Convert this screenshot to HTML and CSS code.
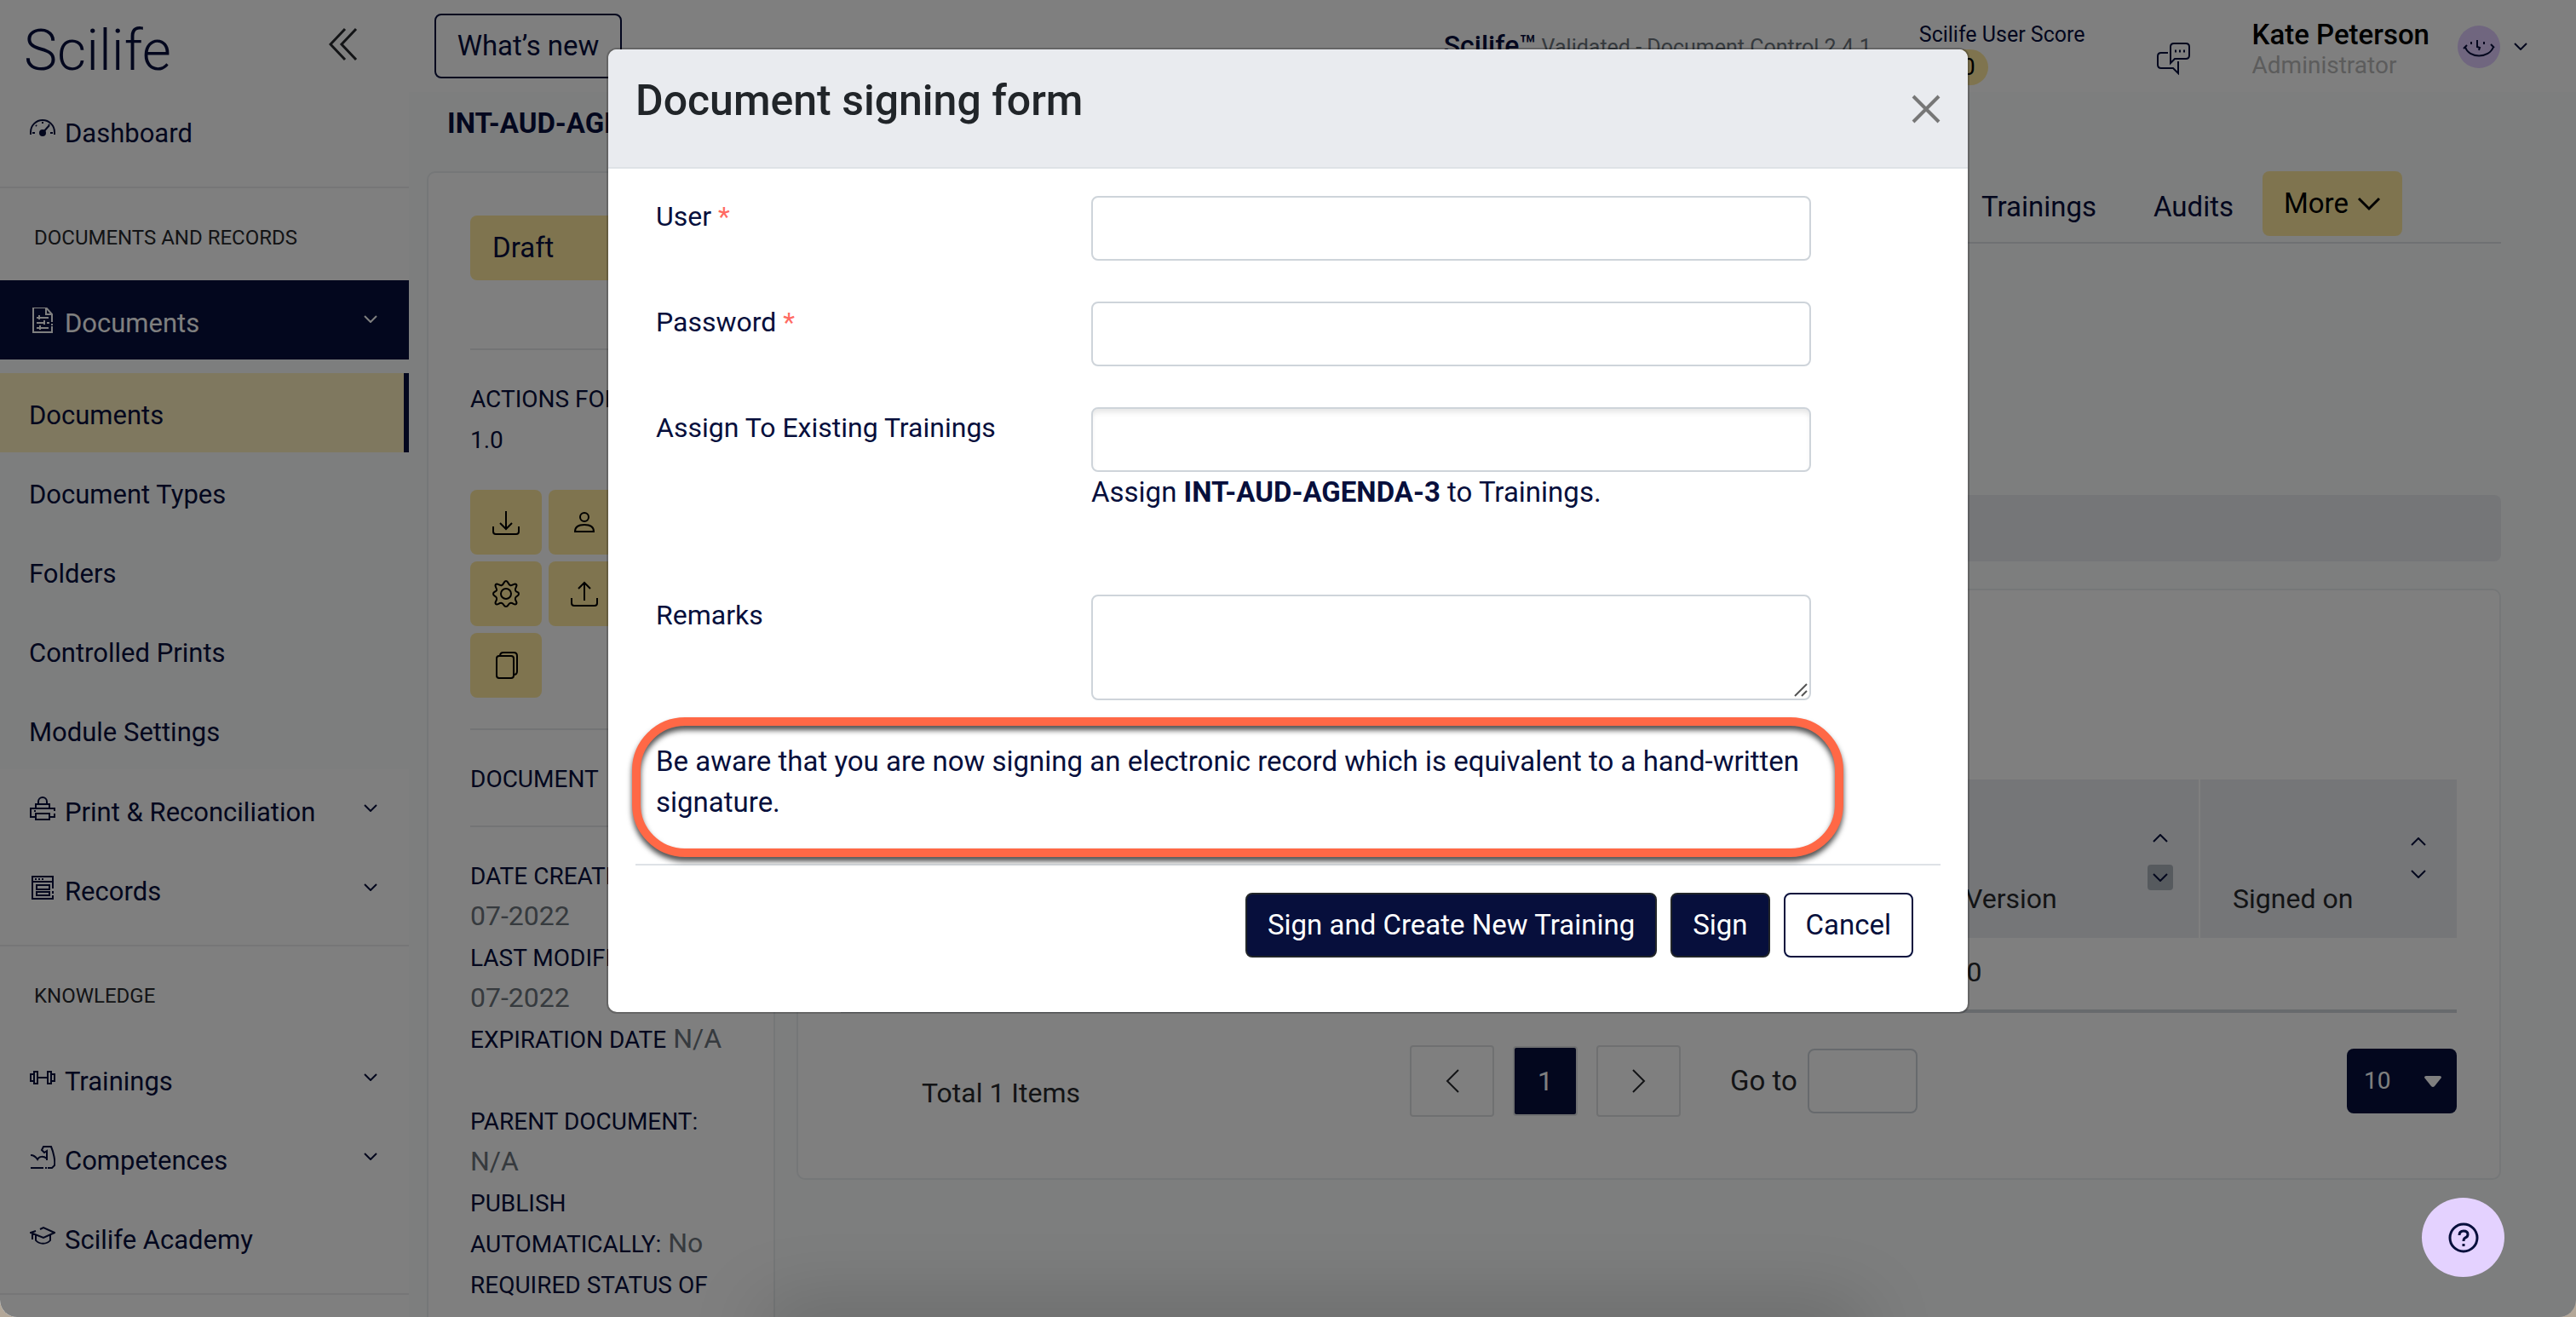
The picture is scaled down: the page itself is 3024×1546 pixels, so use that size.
FILE: index.html
```html
<!DOCTYPE html>
<html lang="en">

<head>
    <meta charset="UTF-8">
    <meta name="viewport" content="width=device-width, initial-scale=1.0">
    <title>Scilife - Document signing form</title>
    <link rel="stylesheet" href="styles.css">
</head>

<body>
    <div class="page">
        <nav class="sidebar">
            <div class="side-top">
                <a class="logo" href="#">Scilife</a>
                <button class="collapse" aria-label="Collapse menu">
                    <svg width="34" height="40" viewBox="0 0 34 40"><path d="M19 2L2 20l17 18M32 2L15 20l17 18" /></svg>
                </button>
            </div>
            <a class="item" href="#">
                <svg class="ico" viewBox="0 0 30 30"><path d="M1 20v-3a14 14 0 0 1 28 0v3M15 18l8-9M15 5v2M7 9l1 1M3 18h3M24 18h3M22 8l1 1" /><circle class="fill" cx="15" cy="18" r="3" /></svg>
                Dashboard
            </a>
            <hr>
            <h2>DOCUMENTS AND RECORDS</h2>
            <a class="item open" href="#">
                <svg class="ico" viewBox="0 0 30 30"><path d="M26 17V8l-7-8H4v29h22v-7M26 19v2M19 0v8h7M8 12h14M8 18h10M20 18h3M8 24h14M11 9v5M17 15v5M12 21v5" /></svg>
                Documents
                <svg class="chev" viewBox="0 0 16 9"><path d="M1 1l7 7 7-7" /></svg>
            </a>
            <div class="submenu">
                <a class="sub active" href="#">Documents</a>
                <a class="sub" href="#">Document Types</a>
                <a class="sub" href="#">Folders</a>
                <a class="sub" href="#">Controlled Prints</a>
                <a class="sub" href="#">Module Settings</a>
            </div>
            <a class="item" href="#">
                <svg class="ico" viewBox="0 0 30 30"><path d="M10 8V6a5 5 0 0 1 10 0v2M7 14V9h16v5M7 24H1V14h28v3M29 20v4h-6M7 20h16v7H7zM5 17h2" /></svg>
                Print &amp; Reconciliation
                <svg class="chev" viewBox="0 0 16 9"><path d="M1 1l7 7 7-7" /></svg>
            </a>
            <a class="item" href="#">
                <svg class="ico" viewBox="0 0 30 30"><path d="M27 15V1H3v26h24v-4M27 18v3M3 7h24M6 4h2M10 4h2M14 4h2M8 11h15v5H8zM8 19h15v4H8z" /></svg>
                Records
                <svg class="chev" viewBox="0 0 16 9"><path d="M1 1l7 7 7-7" /></svg>
            </a>
            <hr>
            <h2>KNOWLEDGE</h2>
            <a class="item" href="#">
                <svg class="ico" viewBox="0 0 30 30"><path d="M5 7h4v14H5zM5 10H1v8h4M21 7h4v14h-4zM25 10h4v8h-4M9 14h12" /></svg>
                Trainings
                <svg class="chev" viewBox="0 0 16 9"><path d="M1 1l7 7 7-7" /></svg>
            </a>
            <a class="item" href="#">
                <svg class="ico" viewBox="0 0 30 30"><path d="M1 12c4 0 6 2 8 5 2-4 7-4 11-1V7l-3 2-3-3 2-4h9c3 7 5 17 4 22l-3 3h-5M1 27h15M18 27h2M20 16v2" /></svg>
                Competences
                <svg class="chev" viewBox="0 0 16 9"><path d="M1 1l7 7 7-7" /></svg>
            </a>
            <a class="item" href="#">
                <svg class="ico" viewBox="0 0 30 30"><path d="M12 6l4-2 13 6-13 6L1 10l6-2M7 13v6c4 5 13 5 17 0v-6M3 11v7" /></svg>
                Scilife Academy
            </a>
            <hr>
        </nav>

        <div class="main">
            <header class="topbar">
                <button class="whats-new">What’s new</button>
                <div class="brand"><b>Scilife™</b> Validated - Document Control 2.4.1</div>
                <div class="score">
                    <span>Scilife User Score</span>
                    <span class="badge">0</span>
                </div>
                <button class="chat" aria-label="Messages">
                    <svg width="40" height="38" viewBox="0 0 40 38"><path d="M20 1h14q4 0 4 4v10q0 4-4 4H21l-5 5V5q0-4 4-4zM13 12H5q-4 0-4 4v10q0 4 4 4h14l6 6V22" /><path class="dots" d="M21 10h2M26 10h2M31 10h2" /></svg>
                </button>
                <div class="user">
                    <b>Kate Peterson</b>
                    <span>Administrator</span>
                </div>
                <svg class="avatar" viewBox="0 0 50 50"><circle cx="25" cy="25" r="25" /><path d="M9 25c4 14 28 14 33 0M7 27l4-4M39 22l4 4M16 19v3M31 19v3M23 17v8l3 1-1 3" /></svg>
                <svg class="chev" viewBox="0 0 16 9"><path d="M1 1l7 7 7-7" /></svg>
            </header>
            <h1>INT-AUD-AGENDA-3</h1>

            <div class="columns">
                <aside class="card info">
                    <button class="status">Draft</button>
                    <hr class="after-status">
                    <p><span class="label">ACTIONS FOR VERSION<br>1.0</span></p>
                    <div class="actions">
                        <button aria-label="Download"><svg viewBox="0 0 32 32"><path d="M16 3v21M9 17l7 7 7-7M1 21v6q0 3 3 3h24q3 0 3-3v-6" /></svg></button>
                        <button aria-label="Assign user"><svg viewBox="0 0 32 32"><circle cx="16" cy="10" r="5" /><path d="M5 27q0-8 11-8t11 8z" /></svg></button>
                        <button aria-label="Edit"><svg viewBox="0 0 32 32"><path d="M4 28l2-8L24 2l6 6-18 18z" /></svg></button>
                        <button aria-label="Settings"><svg viewBox="0 0 32 32"><circle cx="16" cy="16" r="6" /><path d="M16 1c3 0 2 4 5 5s5-3 7-1-2 4-1 7 4 1 4 4-3 2-4 5 3 5 1 7-4-2-7-1-2 4-5 4-2-3-5-4-5 3-7 1 2-4 1-7-4-2-4-5 3-2 4-4-3-5-1-7 4 2 7 1 2-5 5-5z" /></svg></button>
                        <button aria-label="Upload"><svg viewBox="0 0 32 32"><path d="M16 24V3M9 10l7-7 7 7M1 21v6q0 3 3 3h24q3 0 3-3v-6" /></svg></button>
                        <button aria-label="Add"><svg viewBox="0 0 32 32"><path d="M16 3v26M3 16h26" /></svg></button>
                        <button aria-label="Copy"><svg viewBox="0 0 32 32"><rect x="5" y="5" width="20" height="26" rx="3" /><path d="M9 5q0-4 4-4h12q4 0 4 4v18q0 4-4 4" /></svg></button>
                    </div>
                    <hr>
                    <p><span class="label">DOCUMENT</span></p>
                    <hr>
                    <p>
                        <span class="label">DATE CREATED</span><br>07-2022<br>
                        <span class="label">LAST MODIFIED</span><br>07-2022<br>
                        <span class="label">EXPIRATION DATE</span> N/A<br><br>
                        <span class="label">PARENT DOCUMENT:</span><br>N/A<br>
                        <span class="label">PUBLISH AUTOMATICALLY:</span> No<br>
                        <span class="label">REQUIRED STATUS OF</span>
                    </p>
                </aside>

                <main class="content">
                    <div class="tabs">
                        <a href="#">Trainings</a>
                        <a href="#">Audits</a>
                        <button class="more">More <svg width="28" height="17" viewBox="0 0 28 17"><path d="M2 2l12 12L26 2" /></svg></button>
                    </div>
                    <div class="bar"></div>
                    <section class="card list">
                        <table>
                            <thead>
                                <tr>
                                    <th class="wide"></th>
                                    <th>
                                        <span class="sort sorted">
                                            <svg viewBox="0 0 18 10"><path d="M1 9l8-8 8 8" /></svg>
                                            <span class="on"><svg viewBox="0 0 18 10"><path d="M1 1l8 8 8-8" /></svg></span>
                                        </span>
                                        Version
                                    </th>
                                    <th>
                                        <span class="sort">
                                            <svg viewBox="0 0 18 10"><path d="M1 9l8-8 8 8" /></svg>
                                            <svg viewBox="0 0 18 10"><path d="M1 1l8 8 8-8" /></svg>
                                        </span>
                                        Signed on
                                    </th>
                                </tr>
                            </thead>
                            <tbody>
                                <tr>
                                    <td></td>
                                    <td>1.0</td>
                                    <td></td>
                                </tr>
                            </tbody>
                        </table>
                        <div class="pager">
                            <span class="total">Total 1 Items</span>
                            <button aria-label="Previous"><svg width="16" height="28" viewBox="0 0 16 28"><path d="M15 1L2 14l13 13" /></svg></button>
                            <button class="current">1</button>
                            <button aria-label="Next"><svg width="16" height="28" viewBox="0 0 16 28"><path d="M1 1l13 13L1 27" /></svg></button>
                            <label for="goto">Go to</label>
                            <input id="goto" type="text">
                            <div class="size">
                                <select aria-label="Items per page"><option>10</option></select>
                                <svg viewBox="0 0 20 13"><path d="M0 2q0-2 2-2h16q2 0 2 2l-8 10q-2 2-4 0z" /></svg>
                            </div>
                        </div>
                    </section>
                </main>
            </div>
        </div>

        <div class="backdrop"></div>
        <div class="dock-shadow"></div>

        <div class="modal" role="dialog" aria-labelledby="modal-title">
            <div class="modal-header">
                <h3 id="modal-title">Document signing form</h3>
                <button class="close" aria-label="Close"><svg width="34" height="34" viewBox="0 0 34 34"><path d="M2 2l30 30M32 2L2 32" /></svg></button>
            </div>
            <form class="modal-body">
                <div class="row">
                    <label for="user">User <i>*</i></label>
                    <input id="user" type="text">
                </div>
                <div class="row">
                    <label for="password">Password <i>*</i></label>
                    <input id="password" type="password">
                </div>
                <div class="row">
                    <label for="trainings">Assign To Existing Trainings</label>
                    <div>
                        <input class="inset" id="trainings" type="text">
                        <p class="hint">Assign <b>INT-AUD-AGENDA-3</b> to Trainings.</p>
                    </div>
                </div>
                <div class="row">
                    <label for="remarks">Remarks</label>
                    <div class="area">
                        <textarea id="remarks"></textarea>
                        <svg width="16" height="16" viewBox="0 0 16 16"><path d="M1 15L15 1M9 15l6-6" /></svg>
                    </div>
                </div>
                <div class="note">
                    Be aware that you are now signing an electronic record which is equivalent to a hand-written signature.
                    <div class="callout"></div>
                </div>
                <div class="modal-footer">
                    <button class="btn" type="button">Sign and Create New Training</button>
                    <button class="btn" type="button">Sign</button>
                    <button class="btn outline" type="button">Cancel</button>
                </div>
            </form>
        </div>

        <button class="help" aria-label="Help">
            <svg width="36" height="36" viewBox="0 0 36 36"><circle cx="18" cy="18" r="16" /><path d="M13 15q0-5 5-5t5 4q0 3-3 4-2 1-2 4M18 25v3" /></svg>
        </button>
    </div>
</body>

</html>
```
FILE: styles.css
```css
* {
    box-sizing: border-box;
    margin: 0;
    padding: 0;
}

html {
    background: #b3a798;
}

body {
    font-family: Roboto, "Liberation Sans", sans-serif;
    font-size: 32px;
    line-height: 48px;
    color: #070f3c;
}

button,
input,
select,
textarea {
    font: inherit;
    color: inherit;
    background: none;
    border: none;
}

a {
    color: inherit;
    text-decoration: none;
}

svg {
    fill: none;
    stroke: currentColor;
    stroke-width: 2;
    flex: none;
    display: block;
}

hr {
    border: none;
    border-top: 2px solid #ececee;
}

.page {
    display: flex;
    height: 100vh;
    overflow: hidden;
    position: relative;
    background: #fafcfc;
    border-radius: 0 0 20px 20px;
}

/* sidebar */
.sidebar {
    flex: none;
    width: 480px;
    background: #fff;
    font-size: 31px;
}

.side-top {
    display: flex;
    justify-content: space-between;
    height: 106px;
    padding: 32px 60px 0 28px;
}

.logo {
    font-size: 66px;
    line-height: 56px;
    font-weight: 300;
}

.collapse {
    height: 40px;
    color: #26282c;
}

.collapse svg {
    stroke-width: 3;
}

.item {
    display: flex;
    align-items: center;
    height: 93px;
    padding: 8px 37px 0 35px;
    gap: 11px;
}

.ico {
    width: 30px;
    height: 30px;
    margin-bottom: 8px;
}

.fill {
    fill: currentColor;
}

.chev {
    width: 16px;
    height: 9px;
}

.item .chev {
    margin: 0 0 10px auto;
}

.item.open {
    background: #070f3c;
    color: #fff;
}

.sidebar hr {
    margin-top: 20px;
}

.sidebar h2 {
    height: 108px;
    padding: 34px 40px 0;
    font-size: 24px;
    font-weight: 400;
    color: #26282c;
}

.submenu {
    padding-top: 16px;
    background: #fafcfc;
}

.sub {
    display: flex;
    align-items: center;
    height: 93px;
    padding: 6px 34px 0;
}

.sub.active {
    background: #fff0be;
    border-right: 6px solid #070f3c;
}

/* top bar */
.main {
    flex: 1;
    min-width: 0;
}

.topbar {
    display: flex;
    height: 108px;
    padding: 16px 57px 0 30px;
    background: #fff;
}

.whats-new {
    width: 220px;
    height: 76px;
    border: 2px solid #070f3c;
    border-radius: 8px;
    font-size: 33px;
}

.brand {
    margin-left: auto;
    padding-top: 16px;
    font-size: 25px;
    color: #6c757d;
}

.brand b {
    font-size: 32px;
    font-weight: 500;
    line-height: 40px;
    color: #070f3c;
}

.score {
    margin-left: 56px;
    padding-top: 8px;
    font-size: 25px;
    line-height: 34px;
}

.score span {
    display: block;
}

.score .badge {
    width: 81px;
    height: 42px;
    padding-right: 15px;
    border-radius: 21px;
    background: #ffe99e;
    color: #000;
    font-size: 28px;
    line-height: 42px;
    text-align: right;
}

.chat {
    align-self: flex-start;
    margin: 34px 0 0 84px;
}

.chat .dots {
    stroke-width: 3;
}

.user {
    margin-left: 72px;
    padding-top: 7px;
    line-height: 36px;
}

.user b,
.user span {
    display: block;
}

.user b {
    font-size: 33px;
    font-weight: 500;
    color: #000;
}

.user span {
    font-size: 28px;
    color: #b8b8b8;
}

.avatar {
    width: 50px;
    height: 50px;
    margin: 14px 16px 0 33px;
}

.avatar circle {
    fill: #e0ccff;
    stroke: none;
}

.topbar > .chev {
    margin-top: 34px;
}

h1 {
    height: 93px;
    padding: 13px 45px 0;
    font-size: 33px;
    font-weight: 700;
}

/* page content */
.columns {
    display: grid;
    grid-template-columns: 409px 1fr;
    gap: 25px;
    align-items: start;
    padding: 0 88px 0 21px;
}

.card {
    background: #fff;
    border: 2px solid #ebeef0;
    border-radius: 10px;
}

.info {
    padding: 50px 49px;
    color: #6c757d;
}

.info hr {
    margin: 32px 0;
    border-color: #e6e8ea;
}

.info .after-status {
    margin-top: 80px;
}

.label {
    font-size: 28px;
    line-height: 32px;
    color: #070f3c;
}

.status {
    width: 100%;
    height: 76px;
    padding: 0 26px;
    border-radius: 8px;
    background: #ffe99e;
    color: #070f3c;
    font-size: 33px;
    text-align: left;
}

.actions {
    display: flex;
    flex-wrap: wrap;
    gap: 8px;
    margin: 36px 0;
}

.actions button {
    display: grid;
    place-items: center;
    width: 84px;
    height: 76px;
    border-radius: 8px;
    background: #ffe99e;
    color: #000;
}

.actions svg {
    width: 32px;
    height: 32px;
}

.tabs {
    display: flex;
    justify-content: flex-end;
    padding: 0 116px 7px 0;
    border-bottom: 2px solid #dee2e6;
    font-size: 33px;
}

.tabs a {
    padding: 18px 34px 0 33px;
}

.more {
    display: flex;
    align-items: center;
    justify-content: center;
    gap: 10px;
    width: 164px;
    height: 76px;
    border-radius: 8px;
    background: #ffe99e;
    color: #000;
}

.more svg {
    stroke-width: 3;
}

.bar {
    height: 78px;
    margin: 295px 0 32px;
    border-radius: 8px;
    background: #eaecf0;
}

.list {
    padding: 222px 50px 72px;
}

table {
    width: 100%;
    border-collapse: collapse;
    color: #26282c;
}

th {
    width: 302px;
    height: 186px;
    padding: 62px 36px 20px 38px;
    border-left: 2px solid #fff;
    background: #eaecf0;
    font-weight: 400;
    line-height: 40px;
    text-align: left;
    vertical-align: top;
}

th:nth-child(2) {
    width: 314px;
}

th.wide {
    width: auto;
    border: none;
}

td {
    height: 86px;
    padding: 0 14px 4px;
    border-bottom: 4px solid #ced4da;
}

.sort {
    display: flex;
    flex-direction: column;
    align-items: flex-end;
    gap: 28px;
    height: 58px;
    padding-top: 6px;
    color: #070f3c;
}

.sort.sorted {
    padding-top: 2px;
}

.sort svg {
    width: 18px;
    height: 10px;
}

.sort .on {
    flex: none;
    display: grid;
    place-items: center;
    width: 30px;
    height: 30px;
    margin: -2px -6px 0 0;
    border-radius: 4px;
    background: #adb5bd;
}

.pager {
    display: flex;
    align-items: center;
    margin-top: 38px;
    color: #26282c;
}

.total {
    flex: 0 0 668px;
    padding: 28px 0 0 95px;
}

.pager button {
    display: grid;
    place-items: center;
    width: 99px;
    height: 84px;
    border: 2px solid #dfe0e2;
    border-radius: 4px;
}

.pager .current {
    width: 76px;
    height: 82px;
    margin: 0 22px;
    background: #070f3c;
    color: #fff;
}

.pager label {
    margin-left: 58px;
    font-size: 33px;
}

.pager input {
    width: 129px;
    height: 76px;
    margin-left: 12px;
    border: 2px solid #ced4da;
    border-radius: 8px;
}

.size {
    position: relative;
    margin-left: auto;
}

.size select {
    display: block;
    width: 129px;
    height: 76px;
    padding: 0 20px;
    border-radius: 8px;
    background: #070f3c;
    color: #fff;
    font-size: 28px;
    appearance: none;
}

.size svg {
    position: absolute;
    top: 32px;
    right: 18px;
    width: 20px;
    height: 13px;
    fill: #fff;
    stroke: none;
}

/* modal */
.backdrop {
    position: absolute;
    inset: 0;
    background: rgba(0, 0, 0, .5);
}

.dock-shadow {
    position: absolute;
    top: 100%;
    left: 30%;
    right: 28%;
    height: 40px;
    box-shadow: 0 0 90px 10px rgba(0, 0, 0, .2);
}

.modal {
    position: absolute;
    top: 56px;
    left: 50%;
    width: 1600px;
    max-width: 100%;
    transform: translateX(-50%);
    background: #fff;
    background-clip: padding-box;
    border: 2px solid rgba(0, 0, 0, .2);
    border-radius: 12px;
    overflow: hidden;
}

.modal-header {
    display: flex;
    justify-content: space-between;
    padding: 32px 32px 50px;
    background: #e9ebef;
    border-bottom: 2px solid #dee2e6;
    color: #212529;
}

.modal-header h3 {
    font-size: 50px;
    line-height: 56px;
    font-weight: 500;
}

.close {
    padding-top: 20px;
    height: 56px;
    color: #777;
}

.close svg {
    stroke-width: 4;
}

.modal-body {
    padding: 32px;
}

.row {
    display: grid;
    grid-template-columns: 511px 1fr;
    align-items: start;
    margin: 0 152px 48px 24px;
}

.row i {
    font-style: normal;
    color: #ff6b63;
}

.row input,
.row textarea {
    display: block;
    width: 100%;
    height: 76px;
    padding: 0 24px;
    border: 2px solid #ced4da;
    border-radius: 8px;
}

.row textarea {
    height: 124px;
    resize: none;
}

.area {
    position: relative;
}

/* resize grip */
.area svg {
    position: absolute;
    right: 4px;
    bottom: 4px;
    color: #555;
}

.row .inset {
    box-shadow: inset 0 6px 6px -2px rgba(0, 0, 0, .1);
}

.hint {
    margin-bottom: 48px;
    font-size: 33px;
}

.note {
    position: relative;
    margin: 0 120px 48px 24px;
    font-size: 33px;
}

.callout {
    position: absolute;
    top: -28px;
    right: -6px;
    bottom: -40px;
    left: -28px;
    border: 10px solid #ff6846;
    border-radius: 62px;
    filter: drop-shadow(0 5px 3px rgba(0, 0, 0, .7));
    pointer-events: none;
}

.modal-footer {
    display: flex;
    justify-content: flex-end;
    gap: 16px;
    padding: 32px;
    border-top: 2px solid #dee2e6;
}

.btn {
    height: 76px;
    padding: 0 24px;
    border: 2px solid #212529;
    border-radius: 8px;
    background: #070f3c;
    color: #fff;
    font-size: 33px;
}

.btn.outline {
    border-color: #070f3c;
    background: #fff;
    color: #070f3c;
}

.help {
    position: absolute;
    right: 84px;
    bottom: 47px;
    display: grid;
    place-items: center;
    width: 97px;
    height: 93px;
    border-radius: 50%;
    background: #e4d2ff;
}

.help svg {
    stroke-width: 3;
}
```
